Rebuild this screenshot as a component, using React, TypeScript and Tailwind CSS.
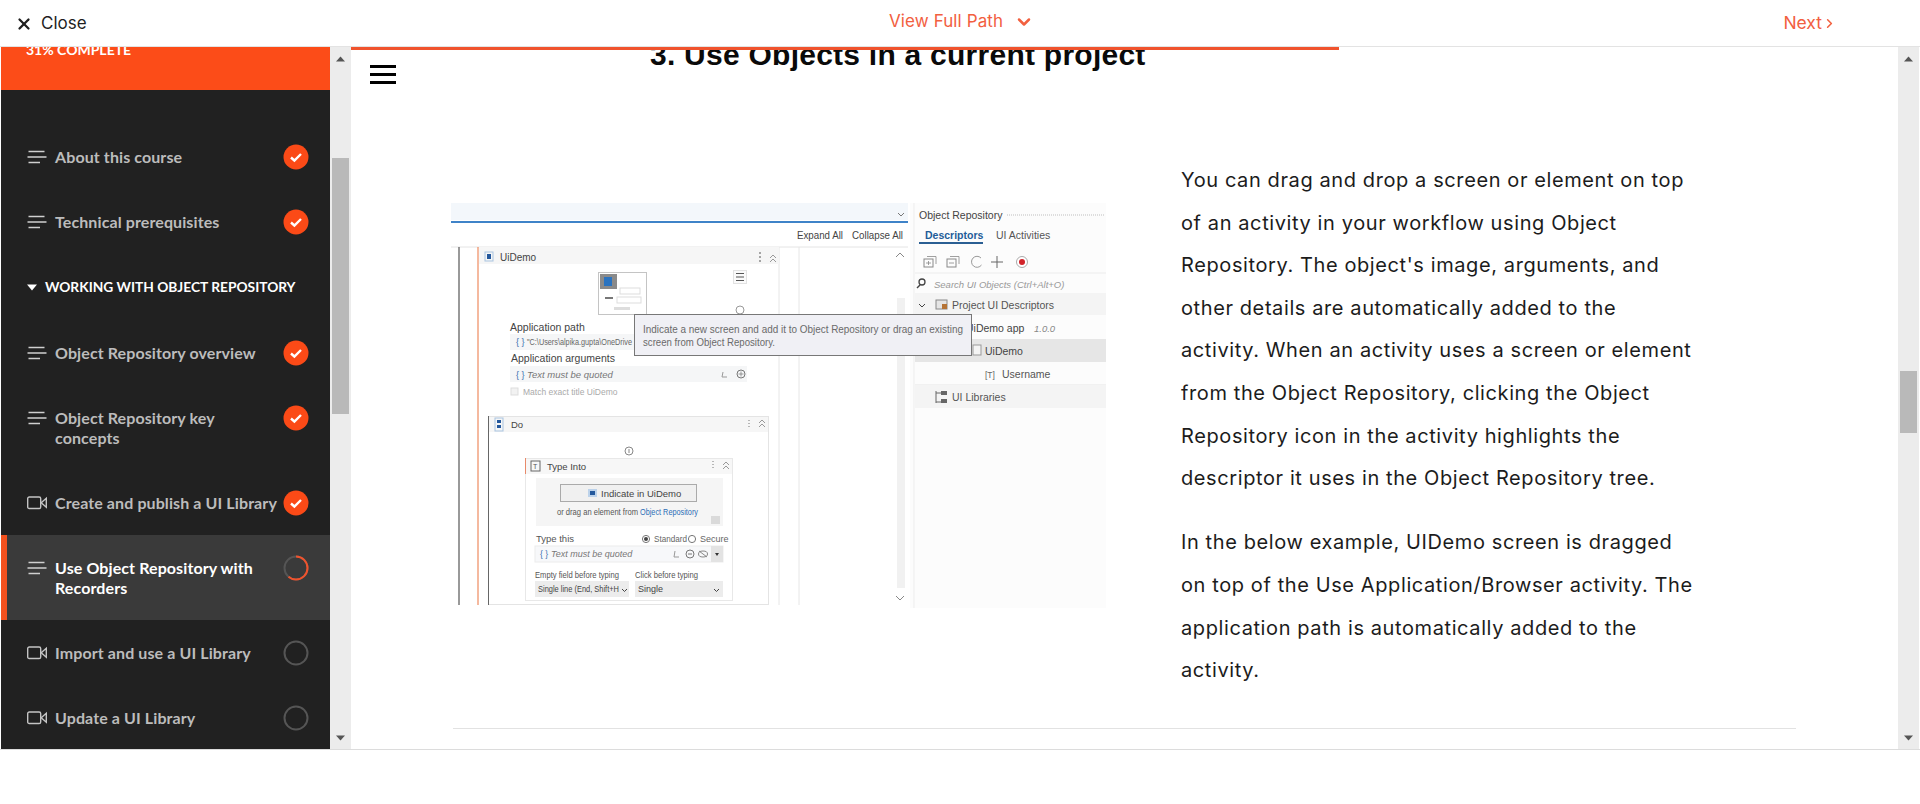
import React from 'react';
import { X, ChevronDown, ChevronRight } from 'lucide-react';

type LessonProps = {
  title: React.ReactNode;
  kind: 'text' | 'video';
  status: 'done' | 'progress' | 'todo';
  active?: boolean;
};

const lessonsTop: LessonProps[] = [
  { title: 'About this course', kind: 'text', status: 'done' },
  { title: 'Technical prerequisites', kind: 'text', status: 'done' },
];

const lessonsBottom: LessonProps[] = [
  { title: 'Object Repository overview', kind: 'text', status: 'done' },
  { title: <>Object Repository key<br />concepts</>, kind: 'text', status: 'done' },
  { title: 'Create and publish a UI Library', kind: 'video', status: 'done' },
  { title: <>Use Object Repository with<br />Recorders</>, kind: 'text', status: 'progress', active: true },
  { title: 'Import and use a UI Library', kind: 'video', status: 'todo' },
  { title: 'Update a UI Library', kind: 'video', status: 'todo' },
];

const LinesIcon = () => (
  <svg width="20" height="14" viewBox="0 0 20 14" fill="none" stroke="#cfcfcf" strokeWidth="1.4" className="shrink-0">
    <path d="M1.5 1.5H17.5M0.5 7H19.5M1.5 12.5H13" />
  </svg>
);

const VideoIcon = () => (
  <svg width="20" height="14" viewBox="0 0 20 14" fill="none" stroke="#c4c4c4" strokeWidth="1.4" className="shrink-0">
    <rect x="0.7" y="1" width="13" height="11.5" rx="1.6" />
    <path d="M19.3 2.2V11.3L14.2 6.8Z" />
  </svg>
);

const StatusIcon = ({ status }: { status: LessonProps['status'] }) => {
  if (status === 'done') {
    return (
      <svg width="26" height="26" viewBox="0 0 26 26" className="shrink-0">
        <circle cx="13" cy="13" r="12.5" fill="#fb4a17" />
        <path d="M8 13.5L11.4 16.5L18 10" fill="none" stroke="#fff" strokeWidth="2.4" />
      </svg>
    );
  }
  return (
    <svg width="26" height="26" viewBox="0 0 26 26" className="shrink-0">
      <circle cx="13" cy="13" r="11.5" fill="none" stroke="#555" strokeWidth="2" />
      {status === 'progress' && (
        <circle
          cx="13"
          cy="13"
          r="11.5"
          fill="none"
          stroke="#f0532d"
          strokeWidth="2"
          strokeDasharray="44 72.3"
          transform="rotate(-90 13 13)"
        />
      )}
    </svg>
  );
};

const Lesson = ({ title, kind, status, active }: LessonProps) => (
  <div
    className={`flex items-start justify-between py-[22.5px] pl-[26px] pr-[21px] ${
      active ? 'bg-[#3a3a3a] border-l-[6px] border-[#f4511e] !pl-[20px] text-white' : 'text-[#bcbcbc]'
    }`}
  >
    <div className="flex items-start">
      <div className="mt-[3px] w-[28px]">{kind === 'text' ? <LinesIcon /> : <VideoIcon />}</div>
      <div className="text-[16px] leading-[20px] font-bold whitespace-nowrap tracking-[0.1px]">{title}</div>
    </div>
    <div className="-mt-[3px] -mb-[3px]">
      <StatusIcon status={status} />
    </div>
  </div>
);

const Scrollbar = ({ thumbTop, thumbHeight, width }: { thumbTop: string; thumbHeight: string; width: string }) => (
  <div className={`${width} shrink-0 bg-[#ececec] flex flex-col items-center`}>
    <svg width="9" height="6" viewBox="0 0 9 6" className="mt-[9px]">
      <path d="M4.5 0.5L9 5.5H0Z" fill="#555" />
    </svg>
    <div className={`${thumbTop} ${thumbHeight} w-[17px] bg-[#b9b9b9]`} />
    <svg width="9" height="6" viewBox="0 0 9 6" className="mt-auto mb-[8px]">
      <path d="M4.5 5.5L9 0.5H0Z" fill="#555" />
    </svg>
  </div>
);

// the lesson's embedded screenshot of the Studio designer, drawn in page coordinates
const DesignerShot = () => {
  const ui = { fontFamily: '"Liberation Sans", sans-serif' };
  return (
    <svg width="655" height="405" viewBox="451 203 655 405" className="shrink-0 mt-[45px]" style={ui}>
      <rect x="451" y="203" width="655" height="405" fill="#fff" />
      <rect x="451" y="203" width="457" height="17" fill="#f3f7fb" />
      <rect x="451" y="221" width="457" height="2" fill="#3f83c8" />
      <rect x="910" y="203" width="196" height="405" fill="#fcfcfc" />
      <path d="M898 213L901 216L904 213" fill="none" stroke="#777" />
      <text x="797" y="239" fontSize="11" fill="#444" textLength="46" lengthAdjust="spacingAndGlyphs">Expand All</text>
      <text x="852" y="239" fontSize="11" fill="#444" textLength="51" lengthAdjust="spacingAndGlyphs">Collapse All</text>
      <path d="M451 247H908" stroke="#e4e4e4" />

      <path d="M459 247V605" stroke="#555" strokeWidth="1.2" />
      <path d="M478 247V605" stroke="#ef8a5f" strokeWidth="1.2" />
      <path d="M779 247V605M799 247V605" stroke="#e6e6e6" />
      <rect x="897" y="298" width="8" height="290" fill="#f1f1f1" />
      <path d="M896 257L900 253L904 257M896 596L900 600L904 596" fill="none" stroke="#888" />

      <rect x="479" y="247" width="300" height="17" fill="#f6f6f6" />
      <rect x="485" y="252" width="8" height="9" fill="none" stroke="#a9c4e0" />
      <rect x="487" y="254" width="4" height="5" fill="#24589c" />
      <text x="500" y="261" fontSize="10" fill="#444">UiDemo</text>
      <path d="M760 252V254M760 256V258M760 260V262" stroke="#555" />
      <path d="M770 258L773 255L776 258M770 262L773 259L776 262" fill="none" stroke="#999" />

      <rect x="598.5" y="272.5" width="48" height="42" fill="#fff" stroke="#c4c4c4" />
      <rect x="600" y="274" width="17" height="15" fill="#8a8a8a" />
      <rect x="604" y="277" width="8" height="9" fill="#2a73c0" />
      <rect x="620" y="288" width="20" height="6" fill="none" stroke="#ddd" />
      <rect x="617" y="297" width="24" height="6" fill="none" stroke="#ddd" />
      <rect x="605" y="297" width="8" height="2" fill="#777" />
      <rect x="614" y="307" width="16" height="3" fill="#ddd" />
      <rect x="733.5" y="270.5" width="13" height="13" fill="#fafafa" stroke="#e2e2e2" />
      <path d="M736 273.5H744M736 277H744M736 280.5H744" stroke="#555" />
      <circle cx="740" cy="310" r="4" fill="none" stroke="#999" />

      <text x="510" y="331" fontSize="10.5" fill="#444">Application path</text>
      <rect x="510" y="334" width="236" height="16" fill="#f5f6f7" />
      <text x="516" y="345" fontSize="9" fill="#3a70b0">{'{ }'}</text>
      <text x="527" y="345" fontSize="9" fill="#666" textLength="105" lengthAdjust="spacingAndGlyphs">"C:\Users\alpika.gupta\OneDrive</text>
      <text x="511" y="362" fontSize="10.5" fill="#444">Application arguments</text>
      <rect x="510" y="366" width="237" height="16" fill="#f5f6f7" />
      <text x="516" y="378" fontSize="9" fill="#3a70b0">{'{ }'}</text>
      <text x="527" y="378" fontSize="9.5" fontStyle="italic" fill="#777">Text must be quoted</text>
      <path d="M723 372L722 377H727" fill="none" stroke="#999" />
      <circle cx="741" cy="374" r="4" fill="none" stroke="#777" />
      <path d="M738.5 374H743.5M741 371.5V376.5" stroke="#777" strokeWidth="0.7" />
      <rect x="511" y="388" width="7" height="7" fill="#f2f2f2" stroke="#ddd" />
      <text x="523" y="395" fontSize="8.5" fill="#aaa">Match exact title UiDemo</text>

      <rect x="488.5" y="416.5" width="280" height="188" fill="#fff" stroke="#e4e4e4" />
      <path d="M488.5 416V605" stroke="#666" />
      <rect x="489" y="417" width="279" height="15" fill="#f6f6f6" />
      <rect x="495" y="418" width="8" height="13" fill="none" stroke="#a9c4e0" />
      <rect x="497" y="420" width="4" height="3" fill="#24589c" />
      <rect x="497" y="425" width="4" height="3" fill="#24589c" />
      <text x="511" y="428" fontSize="9.5" fill="#444">Do</text>
      <path d="M749 420V421M749 423V424M749 426V427" stroke="#777" />
      <path d="M759 423L762 420L765 423M759 427L762 424L765 427" fill="none" stroke="#999" />
      <circle cx="629" cy="451" r="4" fill="none" stroke="#888" />
      <path d="M629 449V453" stroke="#888" />

      <rect x="525.5" y="458.5" width="207" height="142" fill="#fff" stroke="#e8e8e8" />
      <path d="M525.5 458V474" stroke="#e88a6a" />
      <rect x="526" y="459" width="206" height="15" fill="#f7f7f7" />
      <rect x="531" y="461" width="9" height="10" fill="none" stroke="#666" />
      <text x="533" y="469" fontSize="7" fill="#555">T</text>
      <text x="547" y="470" fontSize="9.5" fill="#444">Type Into</text>
      <path d="M713 461V462M713 464V465M713 467V468" stroke="#777" />
      <path d="M723 465L726 462L729 465M723 469L726 466L729 469" fill="none" stroke="#999" />
      <rect x="536" y="478" width="187" height="48" fill="#f5f5f5" />
      <rect x="560.5" y="484.5" width="136" height="17" fill="#f0f0f0" stroke="#aaa" />
      <rect x="588" y="489" width="9" height="8" fill="#bcd2ea" />
      <rect x="590" y="491" width="5" height="4" fill="#24589c" />
      <text x="601" y="497" fontSize="9.5" fill="#444">Indicate in UiDemo</text>
      <text x="557" y="515" fontSize="9" fill="#555" textLength="81" lengthAdjust="spacingAndGlyphs">or drag an element from</text>
      <text x="640" y="515" fontSize="9" fill="#2c6db5" textLength="58" lengthAdjust="spacingAndGlyphs">Object Repository</text>
      <rect x="711" y="516" width="9" height="8" fill="#dadada" />
      <text x="536" y="542" fontSize="9.5" fill="#555">Type this</text>
      <circle cx="646" cy="539" r="3.6" fill="#fff" stroke="#777" />
      <circle cx="646" cy="539" r="2" fill="#444" />
      <text x="654" y="542" fontSize="9" fill="#666" textLength="33" lengthAdjust="spacingAndGlyphs">Standard</text>
      <circle cx="692" cy="539" r="3.6" fill="#fff" stroke="#777" />
      <text x="700" y="542" fontSize="9" fill="#666">Secure</text>
      <rect x="535" y="546" width="188" height="16" fill="#f7f8fa" stroke="#ececec" />
      <text x="540" y="557" fontSize="8.5" fill="#3a70b0">{'{ }'}</text>
      <text x="551" y="557" fontSize="9" fontStyle="italic" fill="#777">Text must be quoted</text>
      <path d="M675 551L674 557H679" fill="none" stroke="#999" />
      <circle cx="690" cy="554" r="4" fill="none" stroke="#777" />
      <path d="M688 554H692" stroke="#777" />
      <ellipse cx="703" cy="554" rx="4.5" ry="3" fill="none" stroke="#888" />
      <path d="M699 551L707 557" stroke="#888" />
      <rect x="711" y="546" width="12" height="16" fill="#e3e3e3" />
      <path d="M715 553H719L717 556Z" fill="#333" />
      <text x="535" y="578" fontSize="9" fill="#555" textLength="84" lengthAdjust="spacingAndGlyphs">Empty field before typing</text>
      <text x="635" y="578" fontSize="9" fill="#555" textLength="63" lengthAdjust="spacingAndGlyphs">Click before typing</text>
      <rect x="535" y="581" width="94" height="16" fill="#ececec" />
      <text x="538" y="592" fontSize="9" fill="#444" textLength="81" lengthAdjust="spacingAndGlyphs">Single line (End, Shift+H</text>
      <path d="M622 589L624.5 591.5L627 589" fill="none" stroke="#444" />
      <rect x="635" y="581" width="88" height="16" fill="#ececec" />
      <text x="638" y="592" fontSize="9" fill="#444">Single</text>
      <path d="M714 589L716.5 591.5L719 589" fill="none" stroke="#444" />

      <path d="M914 203V608" stroke="#ededed" />
      <text x="919" y="219" fontSize="10.5" fill="#444">Object Repository</text>
      <path d="M1007 215H1105" stroke="#ddd" strokeDasharray="1 1" strokeWidth="2" />
      <text x="925" y="239" fontSize="10.5" fontWeight="600" fill="#1f5c99">Descriptors</text>
      <rect x="919" y="242" width="64" height="2" fill="#2b5f93" />
      <text x="996" y="239" fontSize="10.5" fill="#555">UI Activities</text>
      <rect x="924" y="259" width="9" height="8" fill="none" stroke="#888" />
      <path d="M927 256.5H936V264M926 263H931M928.5 261V265" fill="none" stroke="#888" strokeWidth="0.8" />
      <rect x="947" y="259" width="9" height="8" fill="none" stroke="#888" />
      <path d="M950 256.5H959V264M949 263H954" fill="none" stroke="#888" strokeWidth="0.8" />
      <path d="M981 258A5.5 5.5 0 1 0 981.5 265" fill="none" stroke="#999" />
      <path d="M997 256V268M991 262H1003" stroke="#666" />
      <circle cx="1022" cy="262" r="5.5" fill="#fff" stroke="#aaa" />
      <circle cx="1022" cy="262" r="3" fill="#d2232a" />
      <path d="M915 273H1106" stroke="#ececec" />
      <circle cx="922" cy="282" r="3" fill="none" stroke="#444" strokeWidth="1.3" />
      <path d="M920 285L917 288" stroke="#444" strokeWidth="1.5" />
      <text x="934" y="287.5" fontSize="9.5" fontStyle="italic" fill="#999">Search UI Objects (Ctrl+Alt+O)</text>
      <rect x="915" y="293" width="191" height="22" fill="#f4f4f4" />
      <path d="M919 304L922 307L925 304" fill="none" stroke="#444" />
      <rect x="936" y="300" width="11" height="9" fill="#e5e5e5" stroke="#888" />
      <rect x="942" y="304" width="5" height="5" fill="#b57436" />
      <text x="952" y="309" fontSize="10.5" fill="#555">Project UI Descriptors</text>
      <text x="966" y="332" fontSize="10.5" fill="#444">UiDemo app</text>
      <text x="1034" y="332" fontSize="9.5" fontStyle="italic" fill="#888">1.0.0</text>
      <rect x="915" y="339" width="191" height="23" fill="#e6e6e6" />
      <rect x="973" y="345" width="8" height="10" fill="#f4f4f4" stroke="#999" />
      <text x="985" y="355" fontSize="10.5" fill="#444">UiDemo</text>
      <text x="985" y="378" fontSize="8.5" fill="#666">[T]</text>
      <text x="1002" y="378" fontSize="10.5" fill="#555">Username</text>
      <path d="M915 385H1106" stroke="#e6e6e6" />
      <rect x="915" y="385" width="191" height="23" fill="#f4f4f4" />
      <path d="M936 391V403M936 393H941M936 402H941" fill="none" stroke="#666" />
      <rect x="941" y="391" width="6" height="4" fill="#666" />
      <rect x="941" y="399" width="6" height="4" fill="#666" />
      <text x="952" y="401" fontSize="10.5" fill="#555">UI Libraries</text>

      <rect x="634.5" y="314.5" width="337" height="41" fill="#f0f0f5" stroke="#777" />
      <text x="643" y="333" fontSize="11" fill="#6a6a6a" textLength="320" lengthAdjust="spacingAndGlyphs">Indicate a new screen and add it to Object Repository or drag an existing</text>
      <text x="643" y="346" fontSize="11" fill="#6a6a6a" textLength="132" lengthAdjust="spacingAndGlyphs">screen from Object Repository.</text>
    </svg>
  );
};

export default function App() {
  return (
    <div className="h-[804px] w-[1920px] overflow-hidden bg-white font-['Inter',sans-serif]">
      <header className="h-[47px] flex items-center border-b border-[#e3e3e3]">
        <div className="flex items-center w-[889px] pl-[15px] pt-[2px] text-[#1f1f1f] text-[17px]">
          <X size={18} strokeWidth={3} className="mr-[8px]" />
          Close
        </div>
        <div className="flex items-center gap-[11px] mb-[2px] text-[#f2603f] text-[17px] tracking-[0.1px]">
          View Full Path
          <ChevronDown size={20} strokeWidth={3} />
        </div>
        <div className="flex items-center ml-auto pr-[83px] pt-px text-[#f2603f] text-[17.5px]">
          Next
          <ChevronRight size={15} strokeWidth={2.5} />
        </div>
      </header>

      <div className="flex h-[703px] border-b border-[#dcdcdc] pr-px">
        <aside className="ml-px w-[329px] shrink-0 overflow-hidden bg-[#212121] font-['Lato',sans-serif]">
          <div className="h-[47px] -mt-[4px] bg-[#fc4c18] pl-[25px] text-white font-bold text-[14px] leading-[14px]">
            31% COMPLETE
          </div>
          <div className="h-[34px]" />
          {lessonsTop.map((l, i) => (
            <Lesson key={i} {...l} />
          ))}
          <div className="flex items-center h-[66px] pl-[26px] text-white font-bold text-[13.75px]">
            <svg width="10" height="7" viewBox="0 0 10 7" className="mr-[8px]">
              <path d="M0 0.5H10L5 6.5Z" fill="#fff" />
            </svg>
            WORKING WITH OBJECT REPOSITORY
          </div>
          {lessonsBottom.map((l, i) => (
            <Lesson key={i} {...l} />
          ))}
        </aside>
        <Scrollbar width="w-[21px]" thumbTop="mt-[96px]" thumbHeight="h-[256px]" />

        <main className="relative flex-1 overflow-hidden">
          <div className="absolute left-0 top-0 h-[3px] w-[988px] bg-[#f0532d]" />
          <button className="absolute left-[19px] top-[18px] flex flex-col gap-[5.5px]">
            <span className="block h-[2.5px] w-[26px] bg-black" />
            <span className="block h-[2.5px] w-[26px] bg-black" />
            <span className="block h-[2.5px] w-[26px] bg-black" />
          </button>
          <h1 className="-mt-[10px] pl-[299px] text-[30px] leading-[36px] font-bold text-[#0a0a0a] tracking-[0.25px] font-['Liberation_Sans',sans-serif]">
            3. Use Objects in a current project
          </h1>
          <div className="flex items-start pl-[100px] mt-[85px]">
            <DesignerShot />
            <div className="ml-[75px] pt-px w-[514px] text-[20px] leading-[42.6px] text-[#1c1c1c] tracking-[0.6px]">
              <p className="mb-[21.7px]">
                You can drag and drop a screen or element on top of an activity in your workflow using Object Repository. The object's image, arguments, and other details are automatically added to the activity. When an activity uses a screen or element from the Object Repository, clicking the Object Repository icon in the activity highlights the descriptor it uses in the Object Repository tree.
              </p>
              <p>
                In the below example, UIDemo screen is dragged on top of the Use Application/Browser activity. The application path is automatically added to the activity.
              </p>
            </div>
          </div>
          <div className="ml-[102px] mt-[36px] w-[1343px] border-t border-[#e2e2e2]" />
        </main>
        <Scrollbar width="w-[21px]" thumbTop="mt-[309px]" thumbHeight="h-[62px]" />
      </div>
    </div>
  );
}
